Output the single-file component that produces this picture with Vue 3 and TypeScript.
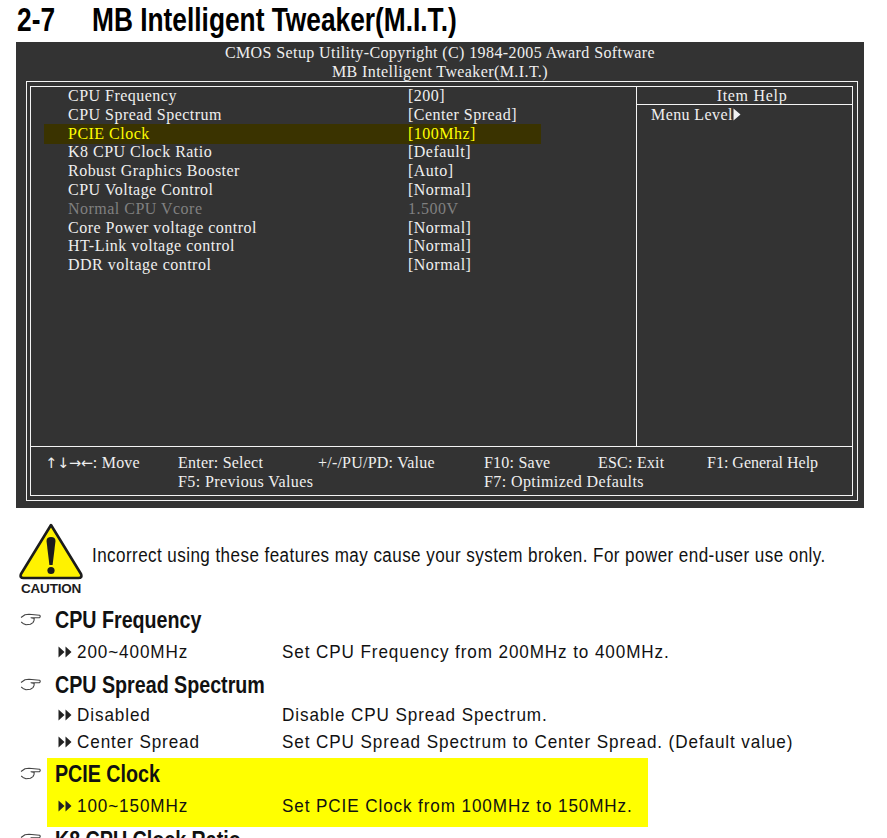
<script setup lang="ts">
interface Item {
  label: string;
  value: string;
  state?: "active" | "off";
}

interface Option {
  name: string;
  text: string;
}

interface Section {
  title: string;
  options: Option[];
  mark?: boolean;
}

const items: Item[] = [
  { label: "CPU Frequency", value: "[200]" },
  { label: "CPU Spread Spectrum", value: "[Center Spread]" },
  { label: "PCIE Clock", value: "[100Mhz]", state: "active" },
  { label: "K8 CPU Clock Ratio", value: "[Default]" },
  { label: "Robust Graphics Booster", value: "[Auto]" },
  { label: "CPU Voltage Control", value: "[Normal]" },
  { label: "Normal CPU Vcore", value: "1.500V", state: "off" },
  { label: "Core Power voltage control", value: "[Normal]" },
  { label: "HT-Link voltage control", value: "[Normal]" },
  { label: "DDR voltage control", value: "[Normal]" },
];

const sections: Section[] = [
  {
    title: "CPU Frequency",
    options: [{ name: "200~400MHz", text: "Set CPU Frequency from 200MHz to 400MHz." }],
  },
  {
    title: "CPU Spread Spectrum",
    options: [
      { name: "Disabled", text: "Disable CPU Spread Spectrum." },
      { name: "Center Spread", text: "Set CPU Spread Spectrum to Center Spread. (Default value)" },
    ],
  },
  {
    title: "PCIE Clock",
    mark: true,
    options: [{ name: "100~150MHz", text: "Set PCIE Clock from 100MHz to 150MHz." }],
  },
  { title: "K8 CPU Clock Ratio", options: [] },
];
</script>

<template>
  <div class="page">
    <h1 class="title">
      <span class="num"><span class="narrow">2-7</span></span>
      <span class="narrow">MB Intelligent Tweaker(M.I.T.)</span>
    </h1>

    <section class="bios">
      <header class="bios-head">
        <div>CMOS Setup Utility-Copyright (C) 1984-2005 Award Software</div>
        <div>MB Intelligent Tweaker(M.I.T.)</div>
      </header>
      <div class="frame">
        <div class="frame-inner">
          <div class="frame-top">
            <ul class="list">
              <li v-for="item in items" :key="item.label" class="row" :class="item.state">
                <span>{{ item.label }}</span>
                <span>{{ item.value }}</span>
              </li>
            </ul>
            <aside class="help">
              <div class="help-head">Item Help</div>
              <div class="help-body">
                Menu Level<svg class="level" width="8" height="13" viewBox="0 0 8 13"><path d="M0.5 0.5 L7.5 6.5 L0.5 12.5 Z" fill="#f2f2f2" /></svg>
              </div>
            </aside>
          </div>
          <footer class="keys">
            <span class="tight"><span class="glyphs">↑↓→←</span>: Move</span>
            <span class="tight">Enter: Select</span>
            <span class="tight">+/-/PU/PD: Value</span>
            <span class="tight">F10: Save</span>
            <span class="tight">ESC: Exit</span>
            <span class="f1">F1: General Help</span>
            <span class="f5">F5: Previous Values</span>
            <span class="f7">F7: Optimized Defaults</span>
          </footer>
        </div>
      </div>
    </section>

    <div class="caution">
      <div class="badge">
        <svg width="64" height="58" viewBox="0 0 64 58">
          <path d="M32 2 L62 51 Q63.5 55 59.5 55 L4.5 55 Q0.5 55 2 51 Z" fill="#fff200" stroke="#1c1c1c" stroke-width="2.6" stroke-linejoin="round" />
          <path d="M27.5 18 Q27.5 14 32 14 Q36.5 14 36.5 18 L33.6 42 L30.4 42 Z" fill="#1c1c1c" />
          <circle cx="32" cy="47.5" r="3.6" fill="#1c1c1c" />
        </svg>
        <span>CAUTION</span>
      </div>
      <p><span class="narrow">Incorrect using these features may cause your system broken. For power end-user use only.</span></p>
    </div>

    <section v-for="sec in sections" :key="sec.title" class="sec">
      <svg class="hand" width="21" height="14" viewBox="0 0 21 14">
        <path d="M1 4.5 L5 1.8 L9 1.2 L19.6 2.2 Q20.8 3.4 19.6 4.6 L11 4.8 L14.2 5.4 L14 7.4 L13 9.6 L10.4 11.2 L6 11.8 L3 10.4 L1.2 9" fill="none" stroke="#444" stroke-width="1.1" stroke-linejoin="round" />
      </svg>
      <div class="sec-body" :class="{ mark: sec.mark, single: sec.options.length === 1 }">
        <h2><span class="narrow head">{{ sec.title }}</span></h2>
        <div v-for="opt in sec.options" :key="opt.name" class="opt">
          <svg width="14" height="12" viewBox="0 0 14 12">
            <path d="M0.5 0.5 L6.5 6 L0.5 11.5 Z M7.5 0.5 L13.5 6 L7.5 11.5 Z" fill="#222" />
          </svg>
          <span class="opt-name"><span class="narrow">{{ opt.name }}</span></span>
          <span class="narrow">{{ opt.text }}</span>
        </div>
      </div>
    </section>
  </div>
</template>

<style scoped>
.page {
  height: 838px;
  overflow: hidden;
  color: #111;
  font-family: "Liberation Sans", Arial, sans-serif;
}

/* no narrow family installed, so squeeze the sans */
.narrow {
  display: inline-block;
  transform: scaleX(0.9);
  transform-origin: left center;
  white-space: nowrap;
}

.title {
  display: flex;
  height: 42px;
  margin: 0;
  padding-left: 17px;
  box-sizing: border-box;
  font-size: 33px;
  line-height: 40px;
  font-weight: 700;
  color: #000;
  white-space: nowrap;
}

.title .narrow {
  transform: scaleX(0.797);
}

.num {
  width: 75px;
}

/* bios screen */
.bios {
  width: 848px;
  height: 466px;
  margin-left: 16px;
  background: #333;
  color: #efefef;
  font-family: "Liberation Serif", "Times New Roman", serif;
  font-size: 16px;
  letter-spacing: 0.4px;
}

.bios-head {
  height: 39px;
  padding-top: 1px;
  box-sizing: border-box;
  text-align: center;
  line-height: 19px;
}

.frame {
  width: 832px;
  height: 420px;
  margin-left: 10px;
  padding: 4px 4px 4px 3px;
  box-sizing: border-box;
  border: 1px solid #f4f4f4;
}

.frame-inner {
  height: 100%;
  border: 1px solid #f4f4f4;
  box-sizing: border-box;
}

.frame-top {
  display: flex;
  height: 360px;
  box-sizing: border-box;
  border-bottom: 1px solid #f4f4f4;
}

.list {
  width: 606px;
  margin: 0;
  padding: 0.2px 0 0;
  box-sizing: border-box;
  border-right: 1px solid #f4f4f4;
  list-style: none;
}

.row {
  display: grid;
  grid-template-columns: 340px 1fr;
  height: 18.78px;
  width: 473px;
  margin-left: 13px;
  padding-left: 24px;
  line-height: 18.78px;
  letter-spacing: 0.48px;
  white-space: nowrap;
}

.row.active {
  margin-block: -0.6px;
  padding-block: 0.6px;
  background: #3a3300;
  color: #ffff00;
}

.row.off {
  color: #808080;
}

.help {
  flex: 1;
}

.help-head {
  height: 18px;
  padding-left: 15px;
  box-sizing: border-box;
  border-bottom: 1px solid #f4f4f4;
  text-align: center;
  line-height: 18px;
  letter-spacing: 0.7px;
}

.help-body {
  padding-left: 14px;
  line-height: 20px;
}

.level {
  vertical-align: -1px;
}

.keys {
  display: grid;
  grid-template-columns: 132px 140px 166px 114px 109px 1fr;
  grid-auto-rows: 19px;
  padding: 6px 0 0 15px;
  line-height: 19px;
  white-space: nowrap;
}

.tight {
  letter-spacing: 0.22px;
}

.f1 {
  letter-spacing: 0;
}

.glyphs {
  margin-left: -1px;
  font-family: "DejaVu Sans", sans-serif;
  font-size: 14.5px;
  letter-spacing: -0.2px;
}

.f5 {
  grid-column: 2 / 4;
}

.f7 {
  grid-column: 4 / 7;
}

/* manual text */
.caution {
  display: flex;
  height: 96px;
  padding: 15px 0 0 19px;
  box-sizing: border-box;
}

.badge {
  width: 73px;
  flex-shrink: 0;
  font-size: 13.5px;
  font-weight: 700;
  line-height: 13px;
  color: #1c1c1c;
}

.badge svg {
  display: block;
}

.badge span {
  display: block;
  margin: 1px 0 0 2px;
  letter-spacing: -0.2px;
}

.caution p {
  margin: 20px 0 0;
  font-size: 20px;
  line-height: 24px;
  letter-spacing: 0.5px;
  white-space: nowrap;
}

.caution .narrow {
  transform: scaleX(0.853);
}

.sec {
  display: flex;
  align-items: flex-start;
  padding-left: 20px;
}

.hand {
  flex-shrink: 0;
  margin: 9px 6px 0 0;
}

.sec-body {
  width: 601px;
  flex-shrink: 0;
  padding-bottom: 3px;
}

.sec-body.single h2 {
  margin-bottom: 2px;
}

.sec-body.single {
  padding-bottom: 4px;
}

.sec-body.mark {
  box-sizing: border-box;
  height: 69px;
  margin-bottom: -3px;
  padding-bottom: 0;
  background: #ffff00;
}

h2 {
  margin: 0;
  padding-left: 8px;
  font-size: 23px;
  line-height: 32px;
  font-weight: 700;
}

.head {
  transform: scaleX(0.855);
}

.opt {
  display: flex;
  align-items: center;
  height: 27px;
  padding-left: 11px;
  font-size: 19px;
  letter-spacing: 1px;
  white-space: nowrap;
}

.opt svg {
  flex-shrink: 0;
  margin-right: 5px;
}

.opt-name {
  flex: none;
  width: 205px;
}
</style>

<style>
html,
body {
  background: #fff;
}
</style>
